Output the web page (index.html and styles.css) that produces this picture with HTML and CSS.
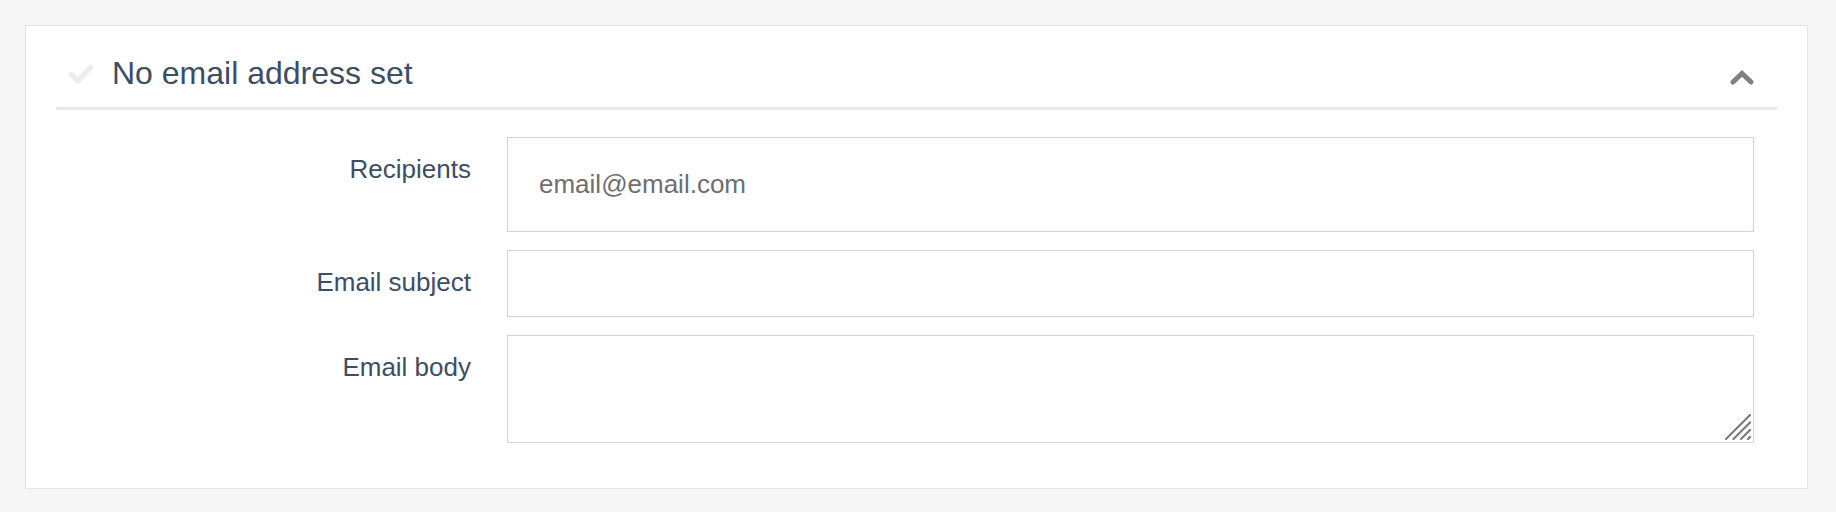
FILE: index.html
```html
<!DOCTYPE html>
<html lang="en">
<head>
<meta charset="utf-8">
<title>Email settings</title>
<link rel="stylesheet" href="styles.css">
</head>
<body>
<section class="card">
  <header class="card-header">
    <svg class="check-icon" width="24" height="20" viewBox="0 0 24 20" aria-hidden="true">
      <polyline points="2.5,10.5 9,17 21.5,3.5" fill="none" stroke="#ededed" stroke-width="5.5" stroke-linecap="round" stroke-linejoin="round"/>
    </svg>
    <h2 class="card-title">No email address set</h2>
    <svg class="chevron-icon" width="24" height="15" viewBox="0 0 24 15" aria-hidden="true">
      <polyline points="3,12 12,3.5 21,12" fill="none" stroke="#808080" stroke-width="5" stroke-linecap="round" stroke-linejoin="miter"/>
    </svg>
  </header>
  <form class="email-form">
    <label class="field-label" for="recipients">Recipients</label>
    <input class="field-input field-recipients" id="recipients" type="text" placeholder="email@email.com">
    <label class="field-label" for="subject">Email subject</label>
    <input class="field-input field-subject" id="subject" type="text">
    <label class="field-label" for="body">Email body</label>
    <div class="textarea-wrap">
      <textarea class="field-input field-body" id="body"></textarea>
      <svg class="resize-grip" width="26" height="26" viewBox="0 0 26 26" aria-hidden="true">
        <g stroke="#777777" stroke-width="2" stroke-linecap="square">
          <line x1="1" y1="25" x2="25" y2="1"/>
          <line x1="8.5" y1="25" x2="25" y2="8.5"/>
          <line x1="16" y1="25" x2="25" y2="16"/>
          <line x1="23" y1="25" x2="25" y2="23"/>
        </g>
      </svg>
    </div>
  </form>
</section>
</body>
</html>
```
FILE: styles.css
```css
html, body {
  margin: 0;
}
body {
  background: #f6f6f6;
  padding: 25px 28px 24px 25px;
  font-family: "Liberation Sans", Arial, sans-serif;
}
.card {
  background: #ffffff;
  border: 1px solid #e4e4e4;
}
.card-header {
  display: flex;
  align-items: center;
  margin: 0 30px;
  padding: 27px 0 14px 13px;
  border-bottom: 3px solid #e6e8eb;
}
.check-icon {
  flex: none;
  margin-top: 1px;
  margin-right: 19px;
}
.card-title {
  flex: 1;
  margin: 0;
  font-size: 32px;
  font-weight: normal;
  line-height: 40px;
  color: #3c4e64;
}
.chevron-icon {
  flex: none;
  margin-top: 8px;
  margin-right: 23px;
}
.email-form {
  display: grid;
  grid-template-columns: 445px 1fr;
  column-gap: 36px;
  row-gap: 18px;
  padding: 27px 53px 45px 0;
}
.field-label {
  text-align: right;
  padding-top: 17px;
  font-size: 26px;
  line-height: 30px;
  color: #3c4e64;
}
.field-input {
  box-sizing: border-box;
  display: block;
  width: 100%;
  margin: 0;
  border: 1px solid #d0d3d8;
  border-radius: 0;
  background: #fff;
  font-family: "Liberation Sans", Arial, sans-serif;
  font-size: 26px;
  color: #3c4e64;
  padding: 0 31px;
  outline: none;
}
.field-input::placeholder {
  color: #6e6e6e;
  opacity: 1;
}
.field-recipients {
  height: 95px;
}
.field-subject {
  height: 67px;
}
.textarea-wrap {
  position: relative;
}
.field-body {
  height: 108px;
  padding: 10px 31px;
  resize: none;
}
.resize-grip {
  position: absolute;
  right: 3px;
  bottom: 3px;
  pointer-events: none;
}
```
